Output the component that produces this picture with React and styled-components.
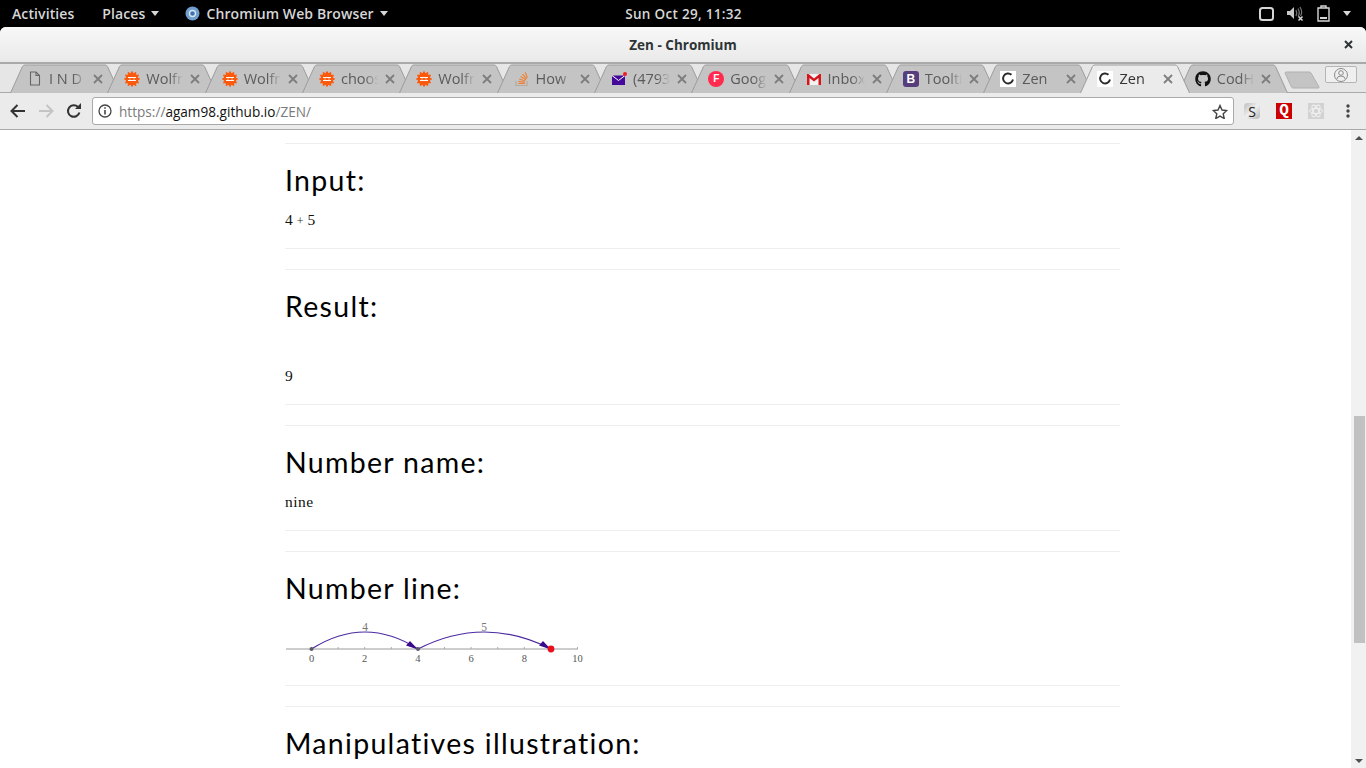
import React from 'react'
import styled, { createGlobalStyle } from 'styled-components'
import { FaGithub } from 'react-icons/fa'

const GlobalStyle = createGlobalStyle`
  html, body {
    margin: 0;
    padding: 0;
    height: 100%;
    overflow: hidden;
    background: #000;
  }
`

const Screen = styled.div`
  width: 1366px;
  height: 768px;
  display: flex;
  flex-direction: column;
  overflow: hidden;
  background: #000;
`

// gnome top bar
const TopBar = styled.div`
  height: 27px;
  flex: none;
  display: grid;
  grid-template-columns: 1fr auto 1fr;
  align-items: center;
  color: #d6d6d6;
  font: 600 14px "Open Sans", sans-serif;
  letter-spacing: 0.1px;
`

const TopLeft = styled.div`
  display: flex;
  align-items: center;
  padding-left: 12px;
`

const TopItem = styled.span`
  display: flex;
  align-items: center;
  gap: 6px;
  margin-right: ${props => props.$gap || 0}px;
`

const Caret = styled.span`
  width: 0;
  height: 0;
  border-left: 4.5px solid transparent;
  border-right: 4.5px solid transparent;
  border-top: 5px solid #d6d6d6;
`

const Clock = styled.div`
  font-size: 13.5px;
  letter-spacing: 0.3px;
  margin-left: 1px;
`

const TopRight = styled.div`
  display: flex;
  align-items: center;
  justify-content: flex-end;
  padding-right: 15px;
  gap: 13px;
`

const Window = styled.div`
  flex: 1;
  min-height: 0;
  display: flex;
  flex-direction: column;
  border-radius: 6px 6px 0 0;
  overflow: hidden;
  background: #fff;
`

const TitleBar = styled.div`
  height: 35px;
  flex: none;
  display: flex;
  align-items: center;
  justify-content: center;
  position: relative;
  background: linear-gradient(#f8f8f8, #e9e9e9);
  border-bottom: 2px solid #a9a9a9;
  box-sizing: content-box;
  color: #2e3436;
  font: 700 13.5px "Open Sans", sans-serif;
`

const CloseWindow = styled.svg`
  position: absolute;
  right: 13px;
  top: 13px;
`

const TabStrip = styled.div`
  height: 28px;
  flex: none;
  display: flex;
  position: relative;
  padding-left: 10px;
  background: #e6e6e6;
  border-bottom: 1px solid #a9a9a9;
`

const Tab = styled.div`
  width: 110px;
  height: 29px;
  flex: none;
  position: relative;
  z-index: ${props => (props.$active ? 2 : 1)};
  margin-right: -12.7px;
  padding-left: 17px;
  box-sizing: border-box;
  display: flex;
  align-items: center;
  color: ${props => (props.$active ? '#333' : '#5a5a5a')};
  font: 14.5px "Open Sans", sans-serif;
`

const TabShape = styled.svg`
  position: absolute;
  left: 0;
  top: 0;
`

const Favicon = styled.span`
  position: relative;
  width: 16px;
  height: 16px;
  flex: none;
  display: flex;
  align-items: center;
  justify-content: center;
  margin-right: 6px;
`

const TabTitle = styled.span`
  position: relative;
  width: 38px;
  margin-right: 6px;
  flex: none;
  overflow: hidden;
  white-space: nowrap;
  -webkit-mask-image: linear-gradient(to right, #000 62%, transparent 98%);
  mask-image: linear-gradient(to right, #000 62%, transparent 98%);
`

const TabClose = styled.svg`
  position: relative;
  flex: none;
`

const NewTab = styled.svg`
  position: absolute;
  left: 1284px;
  top: 7px;
`

const ProfileButton = styled.div`
  position: absolute;
  left: 1325px;
  top: 2px;
  width: 30px;
  height: 15px;
  border: 1px solid #b5b5b5;
  border-radius: 2px;
  background: #efefef;
  display: flex;
  align-items: center;
  justify-content: center;
`

const Toolbar = styled.div`
  height: 36px;
  flex: none;
  display: flex;
  align-items: center;
  padding-left: 4px;
  padding-right: 2px;
  background: #ebebeb;
  border-bottom: 1px solid #a9a9a9;
`

const NavButton = styled.div`
  width: 28px;
  height: 28px;
  flex: none;
  display: flex;
  align-items: center;
  justify-content: center;
`

const Omnibox = styled.div`
  flex: 1;
  height: 26px;
  margin-left: 4px;
  margin-right: 2px;
  padding: 0 5px 0 5px;
  display: flex;
  align-items: center;
  background: #fff;
  border: 1px solid #a9a9a9;
  border-radius: 3px;
  font: 13.6px "Open Sans", sans-serif;
  color: #7a7a7a;
`

const Url = styled.span`
  flex: 1;
  margin-left: 7px;
`

const Host = styled.span`
  color: #111;
`

const ExtButton = styled.div`
  width: 32px;
  height: 28px;
  flex: none;
  display: flex;
  align-items: center;
  justify-content: center;
`

const ExtTile = styled.span`
  width: 16px;
  height: 16px;
  display: flex;
  align-items: center;
  justify-content: center;
  background: ${props => props.$bg};
  color: ${props => props.$color};
  border-radius: ${props => props.$radius || 0}px;
  font: ${props => props.$font};
`

const Viewport = styled.div`
  flex: 1;
  min-height: 0;
  display: flex;
  background: #fff;
`

const Page = styled.div`
  flex: 1;
  min-width: 0;
  padding: 13px 0 0 285px;
  overflow: hidden;
`

const Column = styled.div`
  width: 835px;
  display: flex;
  flex-direction: column;
  gap: 20px;
`

const Pod = styled.section`
  border-top: 1px solid #eee;
  border-bottom: 1px solid #eee;
  padding-bottom: 20px;
`

const PodTitle = styled.h2`
  margin: 20px 0 10px;
  color: #000;
  font: 400 28.5px/33px Lato, sans-serif;
  letter-spacing: 1.3px;
`

const PodBody = styled.div`
  height: ${props => props.$height}px;
  display: flex;
  align-items: flex-end;
  color: #111;
  font: 15.5px/17px "Liberation Serif", serif;
  letter-spacing: ${props => props.$spacing || 0}px;
`

const SmallPlus = styled.span`
  font-size: 12px;
  line-height: 14px;
  margin: 0 4px;
  color: #333;
`

const Scrollbar = styled.div`
  width: 15px;
  flex: none;
  display: flex;
  flex-direction: column;
  align-items: center;
  background: #f1f1f1;
`

const ScrollArrow = styled.div`
  width: 15px;
  height: 15px;
  flex: none;
  display: flex;
  align-items: center;
  justify-content: center;
  &::before {
    content: '';
    width: 0;
    height: 0;
    border-left: 4px solid transparent;
    border-right: 4px solid transparent;
    ${props => (props.$down ? 'border-top' : 'border-bottom')}: 4px solid #505050;
  }
`

const ScrollThumb = styled.div`
  width: 11px;
  height: 227px;
  margin-top: 271px;
  margin-bottom: auto;
  margin-left: 1px;
  background: #c1c1c1;
`

// favicons
const FileIcon = () => (
  <svg width="12" height="15" viewBox="0 0 12 15" fill="none" stroke="#666" strokeWidth="1.1">
    <path d="M1.5 1h5.5l3.500 3.500v9.500h-9z" />
    <path d="M7 1v3.500h3.500" />
  </svg>
)

const spikes = () => {
  const pts = []
  for (let i = 0; i < 24; i++) {
    const r = i % 2 ? 6 : 8.3
    const a = (i * Math.PI) / 12
    pts.push(`${(8 + r * Math.cos(a)).toFixed(2)},${(8 + r * Math.sin(a)).toFixed(2)}`)
  }
  return pts.join(' ')
}

const WolframIcon = () => (
  <svg width="16" height="16" viewBox="0 0 16 16">
    <polygon points={spikes()} fill="#fb5a0c" />
    <path d="M4 6.500h8M4 9.500h8" stroke="#fff" strokeWidth="1.100" />
    <path d="M6 6v4M10 6v4" stroke="#fff" strokeWidth="0.700" opacity="0.7" />
  </svg>
)

const StackIcon = () => (
  <svg width="16" height="16" viewBox="0 0 16 16" fill="none">
    <path d="M2 10v4.500h11V10" stroke="#b9a99a" strokeWidth="1.200" />
    <path d="M4.300 12.500h6.500M4.500 10.400l6.300.9M5.200 8l6 2M6.600 5.400l5.400 3.400M8.600 3.200l4 4.600M11.200 1.200l2.200 5.600" stroke="#ef8236" strokeWidth="1.200" />
  </svg>
)

const MailIcon = () => (
  <svg width="16" height="16" viewBox="0 0 16 16">
    <path d="M1 4.500h13v9.500h-13z" fill="#44099a" />
    <path d="M1 4.500l6.500 5 6.500-5" fill="none" stroke="#fff" strokeWidth="1" />
    <circle cx="14" cy="3" r="2" fill="#ee1c25" />
  </svg>
)

const LetterBadge = styled.span`
  width: 16px;
  height: 16px;
  display: flex;
  align-items: center;
  justify-content: center;
  color: #fff;
  background: ${props => props.$bg};
  border-radius: ${props => props.$radius};
  font: 700 ${props => props.$size}px "Liberation Sans", sans-serif;
`

const GmailIcon = () => (
  <svg width="16" height="16" viewBox="0 0 16 16">
    <path d="M1 3h14v11h-14z" fill="#f2f2f2" />
    <path d="M1 14v-11h1.500l5.500 4.500 5.500-4.500h1.500v11h-2.500v-7l-4.500 3.600-4.500-3.600v7z" fill="#d5141b" />
  </svg>
)

const SpinnerIcon = () => (
  <svg width="16" height="16" viewBox="0 0 16 16">
    <rect width="16" height="16" fill="#fff" />
    <path d="M11.500 3.800a5 5 0 1 0 1.500 4.700" fill="none" stroke="#2b2b2b" strokeWidth="1.900" />
  </svg>
)

const TABS = [
  { title: 'I N D E X', icon: <FileIcon /> },
  { title: 'Wolfram', icon: <WolframIcon /> },
  { title: 'Wolfram', icon: <WolframIcon /> },
  { title: 'choose', icon: <WolframIcon /> },
  { title: 'Wolfram', icon: <WolframIcon /> },
  { title: 'How', icon: <StackIcon /> },
  { title: '(4793)', icon: <MailIcon /> },
  { title: 'Google', icon: <LetterBadge $bg="#ff2a4d" $radius="50%" $size={10}>F</LetterBadge> },
  { title: 'Inbox', icon: <GmailIcon /> },
  { title: 'Tooltip', icon: <LetterBadge $bg="#563d7c" $radius="3px" $size={12}>B</LetterBadge> },
  { title: 'Zen', icon: <SpinnerIcon /> },
  { title: 'Zen', icon: <SpinnerIcon />, active: true },
  { title: 'CodHub', icon: <FaGithub size={16} color="#111" /> },
]

const BrowserTab = ({ title, icon, active }) => (
  <Tab $active={active}>
    <TabShape width="110" height="29" viewBox="0 0 110 29">
      <path
        d="M0.500 29L12.500 2.500Q13.200 1 15 1H95Q96.800 1 97.500 2.500L109.500 29"
        fill={active ? '#ebebeb' : '#c4c4c4'}
        stroke="#9c9c9c"
      />
    </TabShape>
    <Favicon>{icon}</Favicon>
    <TabTitle>{title}</TabTitle>
    <TabClose width="10" height="10" viewBox="0 0 10 10">
      <path d="M1 1l8 8M9 1l-8 8" stroke="#7d7d7d" strokeWidth="1.800" />
    </TabClose>
  </Tab>
)

const NumberLine = () => {
  const unit = 26.6
  const x = n => 26.5 + n * unit
  const labels = [0, 2, 4, 6, 8, 10]
  return (
    <svg width="300" height="50" viewBox="0 0 300 50">
      <line x1="1" y1="34" x2="293" y2="34" stroke="#9a9a9a" />
      {[0, 1, 2, 3, 4, 5, 6, 7, 8, 9, 10].map(n => (
        <line key={n} x1={x(n)} y1="32" x2={x(n)} y2="34" stroke="#aaa" />
      ))}
      {labels.map(n => (
        <text key={n} x={x(n)} y="47" textAnchor="middle" fontFamily="Liberation Serif, serif" fontSize="10.500" fill="#555">
          {n}
        </text>
      ))}
      <text x="80" y="16" textAnchor="middle" fontFamily="Liberation Serif, serif" fontSize="11.500" fill="#777">4</text>
      <text x="199" y="16" textAnchor="middle" fontFamily="Liberation Serif, serif" fontSize="11.500" fill="#777">5</text>
      <path d="M26.500 34Q80 0 133 34" fill="none" stroke="#4b2a9f" strokeWidth="1.200" />
      <path d="M133 34Q199 0 266 34" fill="none" stroke="#4b2a9f" strokeWidth="1.200" />
      <path d="M133 34.500L121 30.500L125 26z" fill="#3a0a8c" />
      <path d="M266 34.500L254 30.500L258 26z" fill="#3a0a8c" />
      <circle cx="26.500" cy="34" r="2" fill="#5a5a6a" />
      <circle cx="133" cy="34" r="2" fill="#5a5a6a" />
      <circle cx="266" cy="34" r="3.400" fill="#e8101c" />
    </svg>
  )
}

const App = () => (
  <Screen>
    <GlobalStyle />
    <TopBar>
      <TopLeft>
        <TopItem $gap={28}>Activities</TopItem>
        <TopItem $gap={26}>Places <Caret /></TopItem>
        <TopItem>
          <svg width="15" height="15" viewBox="0 0 15 15">
            <circle cx="7.500" cy="7.500" r="7" fill="#6f9fd0" />
            <circle cx="7.500" cy="7.500" r="3" fill="#3f74b3" stroke="#dbe6f1" strokeWidth="1.400" />
          </svg>
          Chromium Web Browser <Caret />
        </TopItem>
      </TopLeft>
      <Clock>Sun Oct 29, 11:32</Clock>
      <TopRight>
        <svg width="15" height="14" viewBox="0 0 15 14" fill="none" stroke="#d6d6d6" strokeWidth="2">
          <rect x="1" y="1" width="13" height="12" rx="2.500" />
        </svg>
        <svg width="17" height="15" viewBox="0 0 17 15">
          <path d="M0 5h3l4-4v12l-4-4h-3z" fill="#c8c8c8" />
          <path d="M9 4q1.500 3 0 6M11 2.500q2.500 4 0 8M13 1q3 5 .5 9" fill="none" stroke="#777" strokeWidth="1.200" />
          <path d="M11.500 10.500l4 4M15.500 10.500l-4 4" stroke="#d6d6d6" strokeWidth="1.500" />
        </svg>
        <svg width="13" height="17" viewBox="0 0 13 17" fill="none" stroke="#d6d6d6" strokeWidth="1.400">
          <path d="M1 3h11v13h-11z" />
          <path d="M4 3v-2h5v2" />
          <path d="M3 13h7" strokeWidth="2" />
        </svg>
        <Caret />
      </TopRight>
    </TopBar>
    <Window>
      <TitleBar>
        Zen - Chromium
        <CloseWindow width="9" height="9" viewBox="0 0 9 9">
          <path d="M1 1l7 7M8 1l-7 7" stroke="#2e3436" strokeWidth="2" />
        </CloseWindow>
      </TitleBar>
      <TabStrip>
        {TABS.map((tab, i) => (
          <BrowserTab key={i} {...tab} />
        ))}
        <NewTab width="36" height="18" viewBox="0 0 36 18">
          <path d="M1 2Q1 1 2.500 1H25Q26.500 1 27 2L35 16Q35.500 17 34 17H9Q8 17 7.500 16z" fill="#c4c4c4" stroke="#b0b0b0" />
        </NewTab>
        <ProfileButton>
          <svg width="14" height="14" viewBox="0 0 14 14" fill="none" stroke="#8a8a8a">
            <circle cx="7" cy="7" r="6.500" />
            <circle cx="7" cy="5" r="2.300" />
            <path d="M2.800 11q.5-3 4.200-3t4.200 3" />
          </svg>
        </ProfileButton>
      </TabStrip>
      <Toolbar>
        <NavButton>
          <svg width="16" height="14" viewBox="0 0 16 14" fill="none" stroke="#333" strokeWidth="2">
            <path d="M15 7H2M7.500 1L1.500 7l6 6" />
          </svg>
        </NavButton>
        <NavButton>
          <svg width="16" height="14" viewBox="0 0 16 14" fill="none" stroke="#c4c4c4" strokeWidth="2">
            <path d="M1 7h13M8.500 1l6 6-6 6" />
          </svg>
        </NavButton>
        <NavButton>
          <svg width="16" height="16" viewBox="0 0 16 16" fill="none">
            <path d="M13.400 9.500A5.800 5.800 0 1 1 12 4" stroke="#333" strokeWidth="2" />
            <path d="M9 6h6V0z" fill="#333" />
          </svg>
        </NavButton>
        <Omnibox>
          <svg width="14" height="14" viewBox="0 0 14 14" fill="none" stroke="#444">
            <circle cx="7" cy="7" r="6" strokeWidth="1.300" />
            <path d="M7 6v4.500" strokeWidth="1.600" />
            <path d="M7 3.300v1.500" strokeWidth="1.600" />
          </svg>
          <Url>https://<Host>agam98.github.io</Host>/ZEN/</Url>
          <svg width="16" height="15" viewBox="0 0 16 15" fill="none" stroke="#444" strokeWidth="1.400">
            <path d="M8 1.500l2 4.500 4.800.5-3.600 3.200 1 4.800L8 12.100l-4.200 2.400 1-4.800L1.200 6.500 6 6z" />
          </svg>
        </Omnibox>
        <ExtButton>
          <ExtTile $bg="linear-gradient(135deg, #bdbdbd, #eee 50%, #b5b5b5)" $color="#222" $radius={4} $font="14px 'Open Sans', sans-serif">S</ExtTile>
        </ExtButton>
        <ExtButton>
          <ExtTile $bg="#cc0000" $color="#fff" $font="700 16px 'Liberation Mono', monospace">Q</ExtTile>
        </ExtButton>
        <ExtButton>
          <ExtTile $bg="#d2d2d2">
            <svg width="14" height="14" viewBox="0 0 14 14" fill="none" stroke="#f1f1f1">
              <ellipse cx="7" cy="7" rx="6.500" ry="2.600" />
              <ellipse cx="7" cy="7" rx="6.500" ry="2.600" transform="rotate(60 7 7)" />
              <ellipse cx="7" cy="7" rx="6.500" ry="2.600" transform="rotate(120 7 7)" />
            </svg>
          </ExtTile>
        </ExtButton>
        <ExtButton>
          <svg width="4" height="14" viewBox="0 0 4 14" fill="#444">
            <circle cx="2" cy="2" r="1.700" />
            <circle cx="2" cy="7" r="1.700" />
            <circle cx="2" cy="12" r="1.700" />
          </svg>
        </ExtButton>
      </Toolbar>
      <Viewport>
        <Page>
          <Column>
            <Pod>
              <PodTitle>Input:</PodTitle>
              <PodBody $height={21}>4<SmallPlus>+</SmallPlus>5</PodBody>
            </Pod>
            <Pod>
              <PodTitle>Result:</PodTitle>
              <PodBody $height={51}>9</PodBody>
            </Pod>
            <Pod>
              <PodTitle>Number name:</PodTitle>
              <PodBody $height={21} $spacing={0.5}>nine</PodBody>
            </Pod>
            <Pod>
              <PodTitle>Number line:</PodTitle>
              <PodBody $height={50}><NumberLine /></PodBody>
            </Pod>
            <Pod>
              <PodTitle>Manipulatives illustration:</PodTitle>
              <PodBody $height={200} />
            </Pod>
          </Column>
        </Page>
        <Scrollbar>
          <ScrollArrow />
          <ScrollThumb />
          <ScrollArrow $down />
        </Scrollbar>
      </Viewport>
    </Window>
  </Screen>
)

export default App
